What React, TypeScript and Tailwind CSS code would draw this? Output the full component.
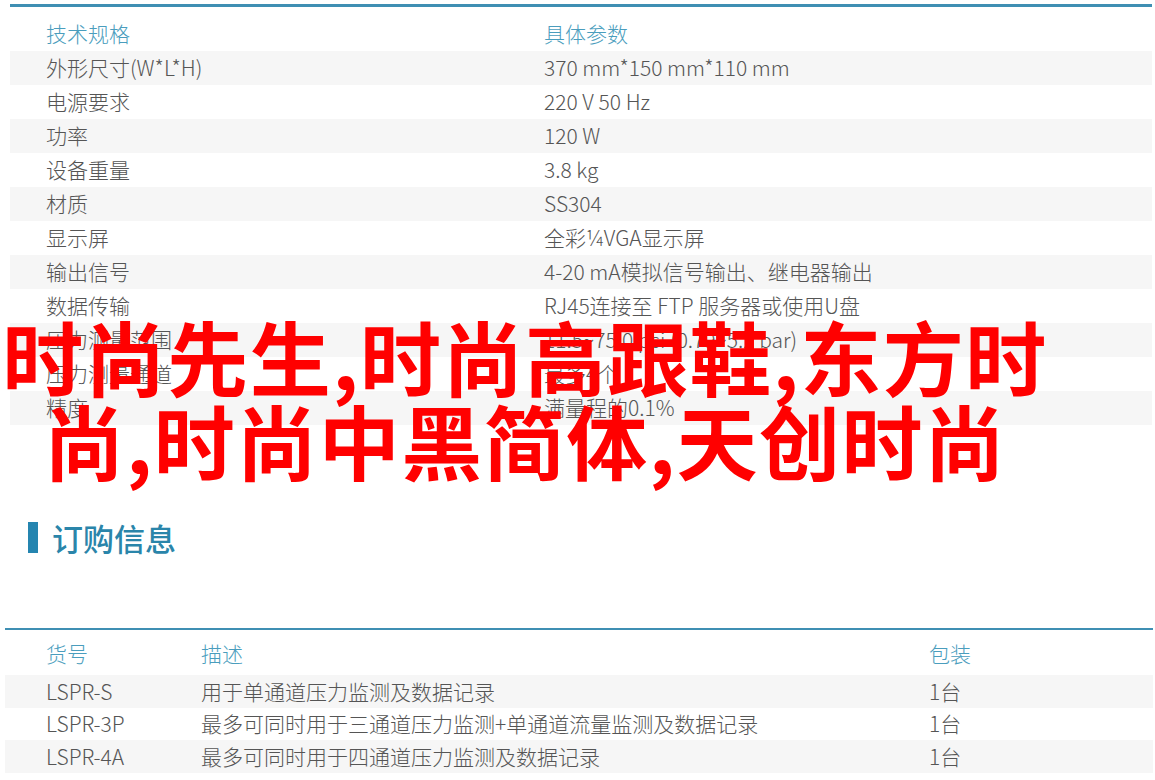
const specs: [string, string][] = [
  ["外形尺寸(W*L*H)", "370 mm*150 mm*110 mm"],
  ["电源要求", "220 V 50 Hz"],
  ["功率", "120 W"],
  ["设备重量", "3.8 kg"],
  ["材质", "SS304"],
  ["显示屏", "全彩¼VGA显示屏"],
  ["输出信号", "4-20 mA模拟信号输出、继电器输出"],
  ["数据传输", "RJ45连接至 FTP 服务器或使用U盘"],
  ["压力测量范围", "11.5~75.0 psi (0.79~5.2 bar)"],
  ["压力测量通道", "最多4个"],
  ["精度", "满量程的0.1%"],
];

const orders: [string, string, string][] = [
  ["LSPR-S", "用于单通道压力监测及数据记录", "1台"],
  ["LSPR-3P", "最多可同时用于三通道压力监测+单通道流量监测及数据记录", "1台"],
  ["LSPR-4A", "最多可同时用于四通道压力监测及数据记录", "1台"],
];

const font = "font-['Noto_Sans_CJK_SC','Noto_Sans',sans-serif]";

export default function App() {
  return (
    <div className={`relative w-[1155px] h-[780px] overflow-hidden bg-white ${font} font-light text-[21px] text-[#555]`}>
      {/* spec table */}
      <div className="ml-[10px] mr-[3px] mt-[4px] border-t-[3px] border-[#3f8fb3] pt-[10px]">
        <div className="h-[34px] grid grid-cols-[498px_1fr] items-center pl-[36px] text-[#4a9dbd]">
          <div>技术规格</div>
          <div>具体参数</div>
        </div>
        {specs.map(([k, v], i) => (
          <div
            key={k}
            className={`h-[34px] grid grid-cols-[498px_1fr] items-center pl-[36px] ${i % 2 === 0 ? "bg-[#f6f6f6]" : "bg-white"}`}
          >
            <div className="whitespace-nowrap">{k}</div>
            <div className="whitespace-nowrap">{v}</div>
          </div>
        ))}
      </div>

      {/* section title */}
      <div className="mt-[97px] ml-[28px] h-[31px] flex items-center gap-[14px]">
        <div className="w-[10px] h-[31px] bg-[#2585b0]" />
        <div className="text-[31px] font-medium text-[#2a85aa] leading-none">订购信息</div>
      </div>

      {/* order table */}
      <div className="mt-[75px] ml-[5px] mr-[2px] border-t-[2px] border-[#3f8fb3] pt-[7px]">
        <div className="h-[38px] pb-[4px] grid grid-cols-[155px_728px_1fr] items-center pl-[41px] text-[#4a9dbd]">
          <div>货号</div>
          <div>描述</div>
          <div>包装</div>
        </div>
        {orders.map(([a, b, c], i) => (
          <div
            key={a}
            className={`h-[32.5px] grid grid-cols-[155px_728px_1fr] items-center pl-[41px] ${i % 2 === 0 ? "bg-[#f6f6f6]" : "bg-white"}`}
          >
            <div>{a}</div>
            <div className="whitespace-nowrap">{b}</div>
            <div>{c}</div>
          </div>
        ))}
      </div>

      {/* overlay caption */}
      <div className="absolute left-0 top-[313px] w-[1050px] text-center text-[81px] leading-[84px] tracking-[1.5px] font-bold text-[#ff0000]">
        时尚先生,时尚高跟鞋,东方时尚,时尚中黑简体,天创时尚
      </div>
    </div>
  );
}
